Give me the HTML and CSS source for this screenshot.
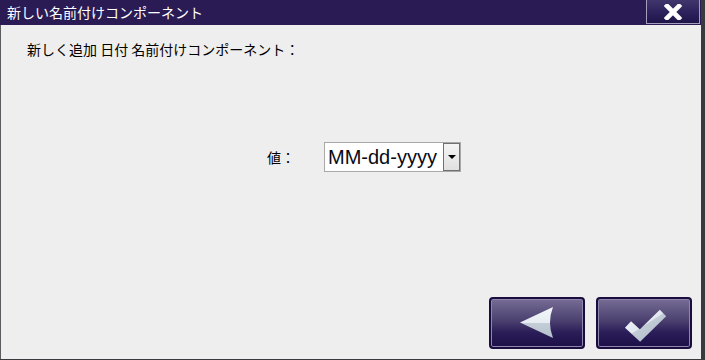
FILE: index.html
```html
<!DOCTYPE html>
<html lang="ja">
<head>
<meta charset="utf-8">
<title>新しい名前付けコンポーネント</title>
<link rel="stylesheet" href="styles.css">
</head>
<body>
<div class="dialog">
  <div class="titlebar">
    <span class="title">新しい名前付けコンポーネント</span>
    <button class="close" type="button" aria-label="閉じる">
      <svg width="18" height="16" viewBox="0 0 18 16">
        <path d="M3 2 L15 14 M15 2 L3 14" stroke="#ffffff" stroke-width="4.6" stroke-linecap="square" fill="none"/>
      </svg>
    </button>
  </div>
  <div class="content">
    <div class="heading">新しく追加 日付 名前付けコンポーネント：</div>
    <div class="field-row">
      <span class="label">値：</span>
      <div class="select">
        <span class="select-value">MM-dd-yyyy</span>
        <span class="select-btn"><span class="caret"></span></span>
      </div>
    </div>
    <div class="actions">
      <button class="nav-btn" type="button" aria-label="戻る">
        <svg width="95" height="51" viewBox="0 0 95 51">
          <defs>
            <linearGradient id="ga" x1="0" y1="0" x2="0" y2="1">
              <stop offset="0" stop-color="#f4f7fa"/>
              <stop offset="0.5" stop-color="#e6ecf2"/>
              <stop offset="0.52" stop-color="#c4ced9"/>
              <stop offset="1" stop-color="#b4c0cc"/>
            </linearGradient>
          </defs>
          <path d="M31 25.5 L64 10 Q58 25.5 64 41 Z" fill="url(#ga)"/>
        </svg>
      </button>
      <button class="nav-btn" type="button" aria-label="確認">
        <svg width="95" height="51" viewBox="0 0 95 51">
          <defs>
            <linearGradient id="gc" x1="0" y1="0" x2="1" y2="1">
              <stop offset="0" stop-color="#f4f7fa"/>
              <stop offset="0.5" stop-color="#e2e8ef"/>
              <stop offset="0.52" stop-color="#c2ccd7"/>
              <stop offset="1" stop-color="#b0bcc8"/>
            </linearGradient>
          </defs>
          <polyline points="32,27.5 44,38.5 67,16" fill="none" stroke="url(#gc)" stroke-width="9" stroke-linejoin="miter" stroke-linecap="butt"/>
        </svg>
      </button>
    </div>
  </div>
</div>
</body>
</html>
```
FILE: styles.css
```css
html, body {
  margin: 0;
  padding: 0;
}
body {
  width: 705px;
  height: 360px;
  overflow: hidden;
  background: #3a3a3e;
  font-family: "Noto Sans CJK JP", "Liberation Sans", sans-serif;
}
.dialog {
  width: 701px;
  height: 359px;
  display: flex;
  flex-direction: column;
}
.titlebar {
  height: 25px;
  flex: none;
  background: #2a1b55;
  display: flex;
  justify-content: space-between;
  align-items: flex-start;
}
.title {
  color: #ffffff;
  font-size: 14px;
  line-height: 16px;
  padding: 4px 0 0 7px;
}
.close {
  width: 54px;
  height: 24px;
  margin: 0 1px 0 0;
  padding: 0;
  border: 1px solid #a59fbd;
  border-top: none;
  background: linear-gradient(#41366c, #2c215a 55%, #20154a);
  display: flex;
  align-items: center;
  justify-content: center;
}
.close svg {
  display: block;
  margin-top: 1px;
}
.content {
  flex: 1;
  background: #eeeeee;
  border-left: 1px solid #5c5c60;
  display: flex;
  flex-direction: column;
  padding: 16px 0 0 26px;
}
.heading {
  font-size: 14px;
  line-height: 16px;
  color: #000000;
}
.field-row {
  margin-top: 85px;
  margin-left: 240px;
  display: flex;
  align-items: center;
  gap: 29px;
}
.label {
  font-size: 14px;
  line-height: 16px;
  color: #000;
}
.select {
  display: flex;
  height: 30px;
  width: 137px;
  box-sizing: border-box;
  border: 1px solid #a8a8a8;
  background: #ffffff;
}
.select-value {
  flex: 1;
  font-family: "Liberation Sans", Arial, sans-serif;
  font-size: 20px;
  line-height: 28px;
  padding-left: 3px;
  color: #0a0a14;
  white-space: nowrap;
  overflow: hidden;
}
.select-btn {
  width: 17px;
  box-sizing: border-box;
  border: 1px solid #707070;
  background: linear-gradient(#f4f4f4, #e0e0e0);
  display: flex;
  align-items: center;
  justify-content: center;
}
.caret {
  width: 0;
  height: 0;
  border-left: 4px solid transparent;
  border-right: 4px solid transparent;
  border-top: 4px solid #000;
}
.actions {
  margin-top: auto;
  display: flex;
  justify-content: flex-end;
  gap: 11px;
  padding: 0 9px 10px 0;
}
.nav-btn {
  width: 96px;
  height: 52px;
  padding: 0;
  box-sizing: border-box;
  border: 2px solid #1a0d3d;
  border-radius: 4px;
  background: linear-gradient(#766d95, #4b406f 45%, #2a1d58 70%, #1d1048);
  box-shadow: inset 0 0 0 1px #8e86ad;
  position: relative;
}
.nav-btn svg {
  position: absolute;
  left: -2px;
  top: -2px;
}
```
